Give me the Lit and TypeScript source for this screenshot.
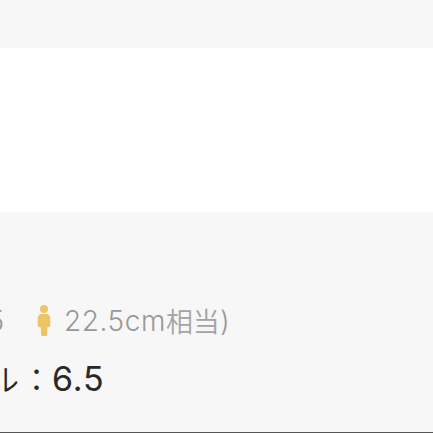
import { LitElement, html, css } from "lit";
import { customElement } from "lit/decorators.js";

@customElement("app-root")
export class AppRoot extends LitElement {
  static styles = css`
    :host {
      display: flex;
      flex-direction: column;
      box-sizing: border-box;
      width: 433px;
      height: 433px;
      overflow: hidden;
      background: #f7f7f7;
      border-bottom: 1px solid #555;
      font-family: Inter, "Noto Sans CJK JP", sans-serif;
      white-space: nowrap;
    }
    .panel {
      flex: none;
      height: 164px;
      margin-top: 48px;
      background: #fff;
    }
    .details {
      padding-top: 89px;
    }
    .note {
      display: flex;
      height: 40px;
      line-height: 40px;
      font-size: 28px;
      font-weight: 300;
      color: #999;
    }
    .previous {
      width: 4px;
      display: flex;
      justify-content: flex-end;
    }
    .person {
      flex: none;
      width: 14px;
      height: 32px;
      margin: 4px 13px 0 33px;
      fill: #efc464;
    }
    .measure {
      letter-spacing: 0.55px;
    }
    .kanji {
      font-family: "Noto Sans CJK JP", sans-serif;
      font-size: 27px;
      font-weight: 350;
      color: #a4a4a4;
    }
    .size {
      display: flex;
      margin-top: 18px;
      height: 40px;
      line-height: 40px;
      font-size: 34px;
      color: #292929;
    }
    .label {
      display: flex;
      justify-content: flex-end;
      width: 52px;
      font-family: "Noto Sans CJK JP", sans-serif;
      font-size: 31px;
      font-weight: 350;
      line-height: 37px;
    }
    .colon {
      margin-left: 2px;
    }
    .number {
      letter-spacing: 0.9px;
    }
  `;

  render() {
    return html`
      <div class="panel"></div>
      <div class="details">
        <div class="note">
          <span class="previous">5</span>
          <svg class="person" viewBox="0 0 14 32">
            <circle cx="7" cy="4" r="4" />
            <path d="M4.3 9H9.7Q13.3 9.5 13.3 14V20.5Q13.3 22 11.2 22.2L10.2 22.6V29.5Q10.2 31 8.5 31H5.5Q4 31 4 29.5V22.6L2.5 22.2Q.7 22 .7 20.5V14Q.7 9.5 4.3 9Z" />
          </svg>
          <span class="measure">22.5cm</span><span class="kanji">相当</span><span>)</span>
        </div>
        <div class="size">
          <span class="label"><span>ル</span><span class="colon">：</span></span><span class="number">6.5</span>
        </div>
      </div>
    `;
  }
}
